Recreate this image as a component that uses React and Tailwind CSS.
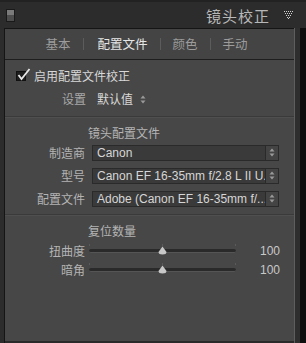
import React from "react";

const F = { fontFamily: '"Noto Sans CJK SC", "Noto Sans", sans-serif' };
const L = { fontFamily: '"Liberation Sans", Arial, sans-serif' };

function Stepper() {
  return (
    <svg width="6" height="9" viewBox="0 0 6 9">
      <path d="M3 0.5 L5.5 3.5 L0.5 3.5 Z" fill="#9a9a9a" />
      <path d="M3 8.5 L5.5 5.5 L0.5 5.5 Z" fill="#9a9a9a" />
    </svg>
  );
}

function Select({ label, value }) {
  return (
    <div className="flex items-center h-[23px]">
      <div className="w-[80px] text-right text-[12px] text-[#b4b4b4] leading-none">{label}</div>
      <div className="ml-[7px] w-[187px] h-[16px] flex border border-[#2a2a2a] bg-[#3a3a3a]">
        <div
          className="flex-1 min-w-0 pl-[4px] text-[12px] leading-[14px] text-[#d6d6d6] whitespace-nowrap"
          style={L}
        >
          {value}
        </div>
        <div className="w-[13px] shrink-0 border-l border-[#2a2a2a] bg-[#444] flex items-center justify-center">
          <Stepper />
        </div>
      </div>
    </div>
  );
}

function Slider({ label }) {
  return (
    <div className="flex items-center h-[19px]">
      <div className="w-[80px] text-right text-[12px] text-[#b4b4b4] leading-none">{label}</div>
      <div className="ml-[4px] w-[147px] relative h-[10px] flex items-center">
        <div className="w-full h-[4px] rounded-[2px] bg-[#2a2a2a] border-b border-[#555]" />
        <div className="absolute left-0 top-[-2px] w-px h-[2px] bg-[#5a5a5a]" />
        <div className="absolute right-0 top-[-2px] w-px h-[2px] bg-[#5a5a5a]" />
        <div className="absolute left-[73px] top-[-2px] w-px h-[2px] bg-[#5a5a5a]" />
        <svg className="absolute left-[69px] top-[0px]" width="9" height="9" viewBox="0 0 9 9">
          <path d="M4.5 0.5 L8.5 6 Q8.5 8.5 4.5 8.5 Q0.5 8.5 0.5 6 Z" fill="#c8c8c8" />
        </svg>
      </div>
      <div className="ml-[24px] w-[20px] text-right text-[12px] text-[#c8c8c8]" style={L}>
        100
      </div>
    </div>
  );
}

export default function App() {
  return (
    <div className="w-[306px] h-[343px] bg-[#2c2c2c] flex flex-col overflow-hidden" style={F}>
      {/* header */}
      <div className="h-[28px] flex items-center border-t-2 border-[#222]">
        <div className="ml-[6px] w-[9px] h-[13px] border border-[#1a1a1a] flex flex-col">
          <div className="h-[5px] bg-[#7a7a7a]" />
          <div className="flex-1 bg-[#4e4e4e]" />
        </div>
        <div className="flex-1" />
        <div className="text-[15px] tracking-[1px] text-[#b8b8b8] leading-none">镜头校正</div>
        <svg className="ml-[14px] mr-[12px]" width="10" height="8" viewBox="0 0 10 8">
          {[0, 2, 4, 6, 8].map((x) => (
            <rect key={"a" + x} x={x} y="0" width="1" height="1" fill="#d0d0d0" />
          ))}
          {[1, 3, 5, 7].map((x) => (
            <rect key={"b" + x} x={x} y="2" width="1" height="1" fill="#d0d0d0" />
          ))}
          {[2, 4, 6].map((x) => (
            <rect key={"c" + x} x={x} y="4" width="1" height="1" fill="#d0d0d0" />
          ))}
          <rect x="3" y="6" width="1" height="1" fill="#d0d0d0" />
          <rect x="5" y="6" width="1" height="1" fill="#d0d0d0" />
          <rect x="4" y="7" width="1" height="1" fill="#d0d0d0" />
        </svg>
      </div>
      {/* body */}
      <div className="flex-1 flex">
        <div className="w-[4px]" />
        <div className="w-[290px] flex flex-col border-l border-t border-[#151515] bg-[#474747]">
          {/* tabs */}
          <div className="h-[31px] flex items-center justify-center text-[12.5px] leading-none border-b border-[#1e1e1e] bg-[#444]">
            <div className="ml-[-6px] text-[#9c9c9c]">基本</div>
            <div className="mx-[13px] w-px h-[12px] bg-[#5c5c5c]" />
            <div className="text-[#e6e6e6]">配置文件</div>
            <div className="mx-[12px] w-px h-[12px] bg-[#5c5c5c]" />
            <div className="text-[#9c9c9c]">颜色</div>
            <div className="mx-[12px] w-px h-[12px] bg-[#5c5c5c]" />
            <div className="text-[#9c9c9c]">手动</div>
          </div>
          {/* enable */}
          <div className="flex items-center mt-[9px] h-[14px]">
            <div className="ml-[11px] w-[10px] h-[10px] bg-[#1e1e1e] border border-[#111] relative">
              <svg className="absolute left-[0px] top-[-4px]" width="14" height="13" viewBox="0 0 14 13">
                <path d="M1.5 7 L4.5 11 L12.5 1" stroke="#e8e8e8" strokeWidth="1.8" fill="none" />
              </svg>
            </div>
            <div className="ml-[8px] text-[12px] text-[#d8d8d8] leading-none">启用配置文件校正</div>
          </div>
          <div className="flex items-center mt-[8px] h-[16px]">
            <div className="ml-[57px] text-[12px] text-[#a8a8a8] leading-none">设置</div>
            <div className="ml-[11px] text-[12px] text-[#d8d8d8] leading-none">默认值</div>
            <div className="ml-[7px] flex items-center"><Stepper /></div>
          </div>
          <div className="mt-[9px] h-px bg-[#3a3a3a] border-b border-[#4f4f4f] box-content" />
          <div className="ml-[83px] mt-[9px] text-[12px] text-[#b4b4b4] leading-none">镜头配置文件</div>
          <div className="mt-[2px] flex flex-col">
            <Select label="制造商" value="Canon" />
            <Select label="型号" value="Canon EF 16-35mm f/2.8 L II U..." />
            <Select label="配置文件" value="Adobe (Canon EF 16-35mm f/..." />
          </div>
          <div className="mt-[4px] h-px bg-[#3a3a3a] border-b border-[#4f4f4f] box-content" />
          <div className="ml-[83px] mt-[9px] text-[12px] text-[#b4b4b4] leading-none">复位数量</div>
          <div className="mt-[4px] flex flex-col">
            <Slider label="扭曲度" />
            <Slider label="暗角" />
          </div>
          <div className="flex-1" />
          <div className="h-[2px] bg-[#2a2a2a]" />
        </div>
        <div className="w-px bg-[#5e5e5e]" />
        <div className="w-[5px] bg-[#2e2e2e]" />
        <div className="flex-1 bg-[#0e0e0e]" />
      </div>
    </div>
  );
}
